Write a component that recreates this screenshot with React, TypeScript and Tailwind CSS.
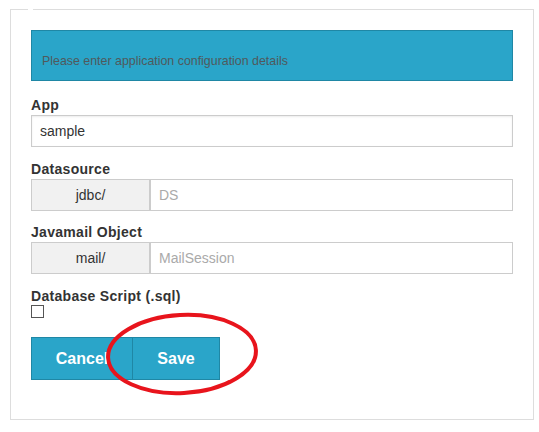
import React from "react";

const label = "block text-[14px] leading-[16px] font-bold text-[#333] tracking-[0.3px]";

function AddonInput({ addon, placeholder }: { addon: string; placeholder: string }) {
  return (
    <div className="flex h-[32px] border border-[#ccc] shadow-[inset_0_1px_2px_rgba(0,0,0,0.08)]">
      <div className="w-[119px] flex items-center justify-center bg-[#f1f1f1] border-r-2 border-[#ccc] text-[14px] text-[#333]">
        {addon}
      </div>
      <input
        className="flex-1 min-w-0 px-[8px] text-[14px] text-[#333] placeholder:text-[#aaa] outline-none bg-white"
        placeholder={placeholder}
      />
    </div>
  );
}

export default function App() {
  return (
    <div className="min-h-screen bg-white pt-[9px] pl-[10px] font-['Liberation_Sans',Arial,sans-serif]">
      <div className="relative w-[524px] h-[411px] border border-[#ddd] px-[20px] pt-[20px]">
        {/* gap in top border */}
        <span className="absolute -top-px left-[17px] w-[5px] h-px bg-white" />

        <div className="h-[51px] bg-[#2aa5c9] border border-[#1f87a5] px-[10px] pt-[22px]">
          <p className="text-[12.4px] leading-[16px] text-[#50595c]">
            Please enter application configuration details
          </p>
        </div>

        <label className={`${label} mt-[16px] mb-[2px]`}>App</label>
        <input
          defaultValue="sample"
          className="w-full h-[32px] border border-[#ccc] px-[8px] text-[14px] text-[#333] outline-none shadow-[inset_0_1px_2px_rgba(0,0,0,0.08)]"
        />

        <label className={`${label} mt-[14px] mb-[2px]`}>Datasource</label>
        <AddonInput addon="jdbc/" placeholder="DS" />

        <label className={`${label} mt-[13px] mb-[2px]`}>Javamail Object</label>
        <AddonInput addon="mail/" placeholder="MailSession" />

        <label className={`${label} mt-[14px] mb-[1px]`}>Database Script (.sql)</label>
        <div className="w-[13px] h-[13px] border border-[#555] bg-white" />

        <div className="flex mt-[19px]">
          <button className="h-[43px] w-[102px] bg-[#2aa5c9] border border-[#1f87a5] text-white font-bold text-[16px]">
            Cancel
          </button>
          <button className="h-[43px] w-[88px] -ml-px bg-[#2aa5c9] border border-[#1f87a5] text-white font-bold text-[16px]">
            Save
          </button>
        </div>

        <svg
          className="absolute left-[93px] top-[301px] pointer-events-none"
          width="158"
          height="86"
          viewBox="0 0 158 86"
        >
          <ellipse
            cx="78"
            cy="43"
            rx="74"
            ry="39"
            fill="none"
            stroke="#e8141c"
            strokeWidth="4"
            transform="rotate(-3 78 43)"
          />
        </svg>
      </div>
    </div>
  );
}
